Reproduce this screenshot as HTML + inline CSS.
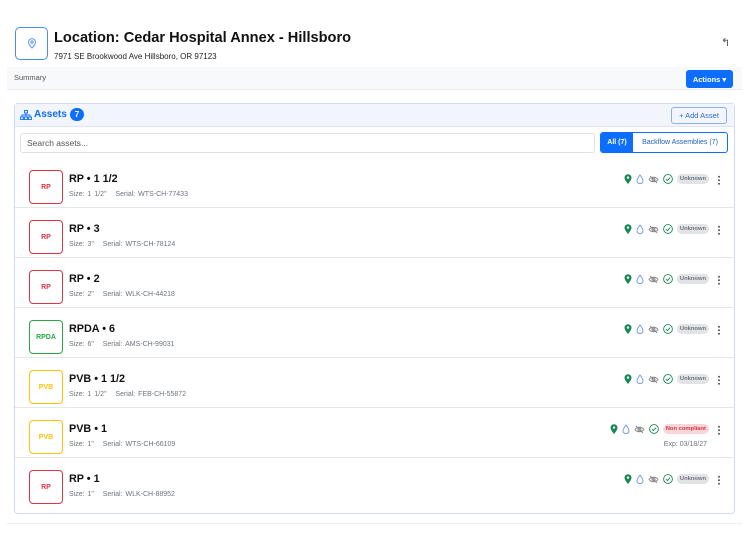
<!DOCTYPE html>
<html><head><style>
*{box-sizing:border-box;margin:0;padding:0}
body{width:750px;height:550px;background:#fff;font-family:"Liberation Sans",sans-serif;color:#212529;position:relative;overflow:hidden}
.abs{position:absolute}
.row{position:absolute;left:15px;width:720px;height:50px;border-bottom:1px solid #e5e7eb}
.bd{position:absolute;left:14px;top:12px;width:34px;height:34px;border:1.5px solid;border-radius:4px;font-size:7px;font-weight:bold;display:flex;align-items:center;justify-content:center}
.t{position:absolute;left:54px;top:15px;font-size:10.8px;font-weight:bold;color:#111}
.s{position:absolute;left:54px;top:33px;font-size:7px;color:#6c757d;word-spacing:1px}
.ic{position:absolute;top:16px;right:26px;display:flex;align-items:center;gap:4px}
.pill{font-size:5.8px;font-weight:bold;border-radius:5px;padding:2px 3px;background:#e2e3e5;color:#6c757d}
.dots{position:absolute;right:15px;top:17px;width:2px;height:10px;background:radial-gradient(circle,#666 0.9px,transparent 1.1px) 0 0/2px 3.5px}
</style></head><body>
<div class="abs" style="left:15px;top:27px;width:33px;height:33px;border:1.5px solid #4a8cf7;border-radius:5px;display:flex;align-items:center;justify-content:center">
<svg width="10" height="11" viewBox="0 0 10 11"><path d="M5 10C5 10 1.5 6.5 1.5 4.2a3.5 3.5 0 0 1 7 0C8.5 6.5 5 10 5 10z" fill="none" stroke="#4a8cf7" stroke-width="0.9"/><circle cx="5" cy="4.2" r="1.2" fill="none" stroke="#4a8cf7" stroke-width="0.9"/></svg></div>
<div class="abs" style="left:54px;top:30px;font-size:14.6px;font-weight:bold;color:#111">Location: Cedar Hospital Annex - Hillsboro</div>
<div class="abs" style="left:54px;top:52px;font-size:8px;color:#222">7971 SE Brookwood Ave Hillsboro, OR 97123</div>
<div class="abs" style="left:721px;top:36px;font-size:11px;color:#555">↰</div>
<div class="abs" style="left:7px;top:67px;width:735px;height:23px;background:#f8f9fa;border-bottom:1px solid #e9ecef"></div>
<div class="abs" style="left:14px;top:73px;font-size:7.5px;color:#555">Summary</div>
<div class="abs" style="left:686px;top:70px;width:47px;height:18px;background:#0d6efd;border-radius:3px;color:#fff;font-size:7.5px;font-weight:bold;display:flex;align-items:center;justify-content:center">Actions ▾</div>
<div class="abs" style="left:14px;top:103px;width:721px;height:411px;border:1px solid #cfdcf5;border-radius:4px"></div>
<div class="abs" style="left:15px;top:104px;width:719px;height:23px;background:#f2f5fc;border-bottom:1px solid #dde5f5"></div>
<svg class="abs" style="left:20px;top:110px" width="12" height="10" viewBox="0 0 12 10"><g fill="none" stroke="#0d6efd" stroke-width="0.9"><rect x="4.5" y="0.5" width="3" height="2.5"/><rect x="0.5" y="7" width="3" height="2.5"/><rect x="4.5" y="7" width="3" height="2.5"/><rect x="8.5" y="7" width="3" height="2.5"/><path d="M6 3v4M2 7V5h8v2"/></g></svg>
<div class="abs" style="left:34px;top:109px;font-size:10px;font-weight:bold;color:#0d6efd">Assets</div>
<div class="abs" style="left:70px;top:108px;width:14px;height:13px;border-radius:7px;background:#0d6efd;color:#fff;font-size:8px;font-weight:bold;text-align:center;line-height:13px">7</div>
<div class="abs" style="left:671px;top:107px;width:56px;height:17px;border:1px solid #8fb0ee;border-radius:3px;font-size:7.5px;color:#2d6ad9;text-align:center;line-height:15px">+ Add Asset</div>
<div class="abs" style="left:20px;top:133px;width:575px;height:20px;border:1px solid #dee2e6;border-radius:3px;font-size:8.5px;color:#555;padding:4px 6px">Search assets...</div>
<div class="abs" style="left:600px;top:132px;width:128px;height:21px;border:1px solid #0d6efd;border-radius:3px;display:flex;font-size:7px;overflow:hidden">
<div style="width:32px;background:#0d6efd;color:#fff;font-weight:bold;text-align:center;line-height:19px">All (7)</div>
<div style="flex:1;color:#1f5fc9;text-align:center;line-height:19px">Backflow Assemblies (7)</div></div>

<div id="rows"></div>
<script>
const R=[["RP","RP • 1 1/2","1 1/2\"","WTS-CH-77433","#dc3545"],["RP","RP • 3","3\"","WTS-CH-78124","#dc3545"],["RP","RP • 2","2\"","WLK-CH-44218","#dc3545"],["RPDA","RPDA • 6","6\"","AMS-CH-99031","#28a745"],["PVB","PVB • 1 1/2","1 1/2\"","FEB-CH-55872","#ffc107"],["PVB","PVB • 1","1\"","WTS-CH-66109","#ffc107"],["RP","RP • 1","1\"","WLK-CH-88952","#dc3545"]];
const icons=`<svg width="8" height="10" viewBox="0 0 8 10"><path d="M4 10S0.5 6 0.5 3.7a3.5 3.5 0 0 1 7 0C7.5 6 4 10 4 10z" fill="#198754"/><circle cx="4" cy="3.6" r="1.2" fill="#fff"/></svg><svg width="8" height="10" viewBox="0 0 8 10"><path d="M4 1C4 1 1 5 1 6.7a3 3 0 0 0 6 0C7 5 4 1 4 1z" fill="none" stroke="#6c8ff0" stroke-width="0.9"/></svg><svg width="11" height="9" viewBox="0 0 11 9"><path d="M1 4.5C3 1.5 8 1.5 10 4.5C8 7.5 3 7.5 1 4.5z" fill="none" stroke="#888" stroke-width="0.9"/><circle cx="5.5" cy="4.5" r="1.5" fill="none" stroke="#888" stroke-width="0.9"/><path d="M2 1l7 7" stroke="#888" stroke-width="0.9"/></svg><svg width="10" height="10" viewBox="0 0 10 10"><circle cx="5" cy="5" r="4.4" fill="none" stroke="#198754" stroke-width="0.9"/><path d="M3 5.2l1.4 1.4L7.2 3.6" fill="none" stroke="#198754" stroke-width="0.9"/></svg>`;
let h="";R.forEach((r,i)=>{const nc=i==5;h+=`<div class="row" style="top:${158+i*50}px${i==6?';border-bottom:none':''}"><div class="bd" style="border-color:${r[4]};color:${r[4]}">${r[0]}</div><div class="t">${r[1]}</div><div class="s">Size: ${r[2]} &nbsp; Serial: ${r[3]}</div><div class="ic">${icons}<span class="pill" ${nc?'style="background:#f8d7da;color:#dc3545"':''}>${nc?'Non compliant':'Unknown'}</span></div><div class="dots"></div>${nc?'<div style="position:absolute;right:28px;top:33px;font-size:7px;color:#6c757d">Exp: 03/18/27</div>':''}</div>`});
document.getElementById("rows").innerHTML=h;
</script>
<div class="abs" style="left:7px;top:523px;width:735px;height:1px;background:#eceef0"></div>
</body></html>
